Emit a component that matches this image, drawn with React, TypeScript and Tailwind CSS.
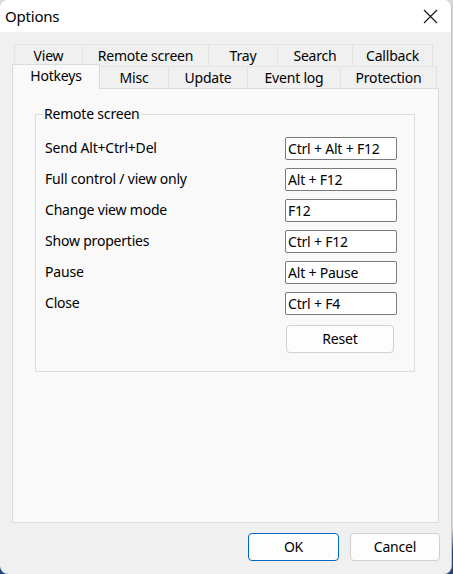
import React from 'react';

const topTabs = [
  { label: 'View', w: 'w-[69px]' },
  { label: 'Remote screen', w: 'w-[127px]' },
  { label: 'Tray', w: 'w-[70px]' },
  { label: 'Search', w: 'w-[76px]' },
  { label: 'Callback', w: 'w-[81px]' },
];

const bottomTabs = [
  { label: 'Misc', w: 'w-[69px]' },
  { label: 'Update', w: 'w-[79px]' },
  { label: 'Event log', w: 'w-[93px]' },
  { label: 'Protection', w: 'w-[96px]' },
];

const hotkeys = [
  { label: 'Send Alt+Ctrl+Del', value: 'Ctrl + Alt + F12' },
  { label: 'Full control / view only', value: 'Alt + F12' },
  { label: 'Change view mode', value: 'F12' },
  { label: 'Show properties', value: 'Ctrl + F12' },
  { label: 'Pause', value: 'Alt + Pause' },
  { label: 'Close', value: 'Ctrl + F4' },
];

const App = () => {
  return (
    <div
      className="w-[453px] h-[574px] bg-[linear-gradient(to_bottom,#d9d9d9_0%,#d9d9d9_92%,#22457e_96%,#22457e_100%)] text-[14px] tracking-[-0.2px] text-black"
      style={{ fontFamily: '"Noto Sans", "Open Sans", sans-serif' }}
    >
      <div className="w-[452px] h-[574px] rounded-[8px] overflow-hidden bg-[#f0f0f0] border-r border-[#c4c4c4] flex flex-col">
        {/* Title bar */}
        <div className="h-[32px] bg-white flex items-center justify-between pl-[5px] pr-[13px]">
          <span className="text-[15px] leading-none">Options</span>
          <svg width="15" height="15" viewBox="0 0 15 15">
            <path d="M1 1 L14 14 M14 1 L1 14" stroke="#1a1a1a" strokeWidth="1.2" fill="none" />
          </svg>
        </div>

        <div className="pl-[12px] pt-[12px]">
          {/* Tab rows */}
          <div className="flex h-[22px] ml-[2px]">
            {topTabs.map((t) => (
              <div
                key={t.label}
                className={`${t.w} h-[23px] border border-b-0 border-[#e3e3e3] -ml-px first:ml-0 bg-[#f0f0f0] flex items-center justify-center leading-none`}
              >
                {t.label}
              </div>
            ))}
          </div>
          <div className="flex h-[24px] items-end -mt-[2px]">
            <div className="w-[88px] h-[25px] border border-b-0 border-[#dcdcdc] bg-[#f9f9f9] flex items-center justify-center leading-none relative z-10 -mb-px pb-[2px]">
              Hotkeys
            </div>
            {bottomTabs.map((t) => (
              <div
                key={t.label}
                className={`${t.w} h-[22px] border border-b-0 border-l-0 border-[#e3e3e3] bg-[#f0f0f0] flex items-center justify-center leading-none`}
              >
                {t.label}
              </div>
            ))}
          </div>

          {/* Panel */}
          <div className="w-[427px] h-[435px] border border-[#dcdcdc] bg-[#f9f9f9] pl-[22px] pt-[25px]">
            <div className="relative w-[380px] h-[258px] border border-[#dcdcdc] pl-[9px] pt-[22px]">
              <span className="absolute left-[7px] top-[-10px] bg-[#f9f9f9] px-px leading-[18px]">
                Remote screen
              </span>
              <div className="flex flex-col gap-[8px]">
                {hotkeys.map((h) => (
                  <div key={h.label} className="flex items-center h-[23px]">
                    <span className="w-[240px] leading-none -mt-px">{h.label}</span>
                    <div className="w-[112px] h-[23px] bg-white border border-[#7a7a7a] rounded-[2px] flex items-center pl-[2px] leading-none">
                      {h.value}
                    </div>
                  </div>
                ))}
              </div>
              <div className="pl-[241px] mt-[10px]">
                <button className="w-[108px] h-[28px] bg-[#fdfdfd] border border-[#d0d0d0] rounded-[4px] flex items-center justify-center leading-none">
                  Reset
                </button>
              </div>
            </div>
          </div>

          {/* Dialog buttons */}
          <div className="flex pl-[236px] mt-[10px] gap-[11px]">
            <button className="w-[91px] h-[28px] bg-[#fdfdfd] border border-[#0067c0] rounded-[4px] flex items-center justify-center leading-none">
              OK
            </button>
            <button className="w-[90px] h-[28px] bg-[#fdfdfd] border border-[#d0d0d0] rounded-[4px] flex items-center justify-center leading-none">
              Cancel
            </button>
          </div>
        </div>
      </div>
    </div>
  );
};

export default App;
